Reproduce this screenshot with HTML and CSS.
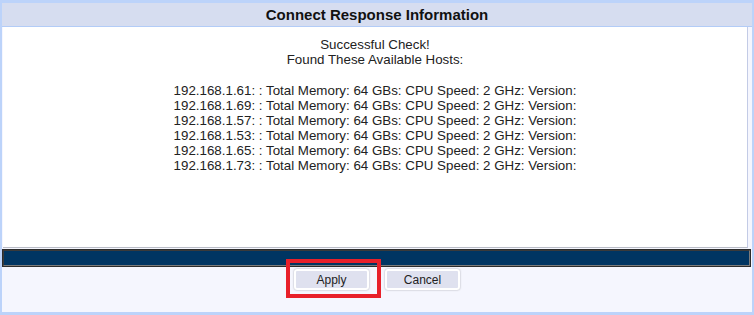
FILE: index.html
```html
<!DOCTYPE html>
<html lang="en">
<head>
  <meta charset="UTF-8" />
  <title>Connect Response Information</title>
  <link rel="stylesheet" href="styles.css">
</head>
<body>
  <div class="dialog">
    <div class="dialog-title">Connect Response Information</div>
    <div class="dialog-body">
      <div class="response">
        <p>Successful Check!<br>Found These Available Hosts:</p>
        <p>
          192.168.1.61: : Total Memory: 64 GBs: CPU Speed: 2 GHz: Version:<br>
          192.168.1.69: : Total Memory: 64 GBs: CPU Speed: 2 GHz: Version:<br>
          192.168.1.57: : Total Memory: 64 GBs: CPU Speed: 2 GHz: Version:<br>
          192.168.1.53: : Total Memory: 64 GBs: CPU Speed: 2 GHz: Version:<br>
          192.168.1.65: : Total Memory: 64 GBs: CPU Speed: 2 GHz: Version:<br>
          192.168.1.73: : Total Memory: 64 GBs: CPU Speed: 2 GHz: Version:
        </p>
      </div>
      <div class="status-bar"></div>
      <div class="actions">
        <button class="btn">Apply</button>
        <button class="btn">Cancel</button>
      </div>
    </div>
    <div class="highlight"></div>
  </div>
</body>
</html>
```

FILE: styles.css
```css
html, body {
  margin: 0;
  height: 100%;
}

body {
  font-family: "Liberation Sans", Arial, sans-serif;
  background: #bcd3fa;
}

.dialog {
  position: relative;
  box-sizing: border-box;
  height: 315px;
  border-style: solid;
  border-color: #bcd3fa;
  border-width: 3px 2px 3px 2px;
  background: #f5f6fe;
  display: flex;
  flex-direction: column;
}

.dialog-title {
  height: 23px;
  line-height: 24px;
  background: #d6ddf0;
  border-bottom: 1px solid #b3ccf7;
  text-align: center;
  font-size: 15px;
  font-weight: bold;
  color: #111;
}

.dialog-body {
  flex: 1;
  display: flex;
  flex-direction: column;
}

.response {
  height: 221px;
  margin-right: 4px;
  margin-left: 1px;
  background: #fff;
  border-right: 1px solid #c3cbe6;
  border-bottom: 1px solid #b9bcc6;
  text-align: center;
  font-size: 13.33px;
  line-height: 15px;
  color: #222;
  padding-top: 10px;
  box-sizing: border-box;
}

.response p {
  margin: 0 0 16px;
}

.status-bar {
  height: 14px;
  margin-top: 1px;
  margin-right: 1px;
  background: #003562;
  border: 2px solid #555;
  border-color: #3a3a3a #7b7b7b #7b7b7b #3a3a3a;
  outline: 1px solid #2c2c2c;
  outline-offset: -1px;
}

.actions {
  display: flex;
  justify-content: center;
  gap: 16px;
  padding-top: 2px;
}

.btn {
  width: 75px;
  height: 21px;
  padding: 0;
  font-family: "Liberation Sans", Arial, sans-serif;
  font-size: 12px;
  color: #222;
  background: #dfe1ef;
  border: 2px solid #fff;
  border-radius: 3px;
  box-shadow: 0 0 2px rgba(0, 0, 0, 0.35);
  cursor: pointer;
}

.highlight {
  position: absolute;
  left: 284px;
  top: 256px;
  width: 87px;
  height: 31px;
  border: 4px solid #e8202a;
}
```
